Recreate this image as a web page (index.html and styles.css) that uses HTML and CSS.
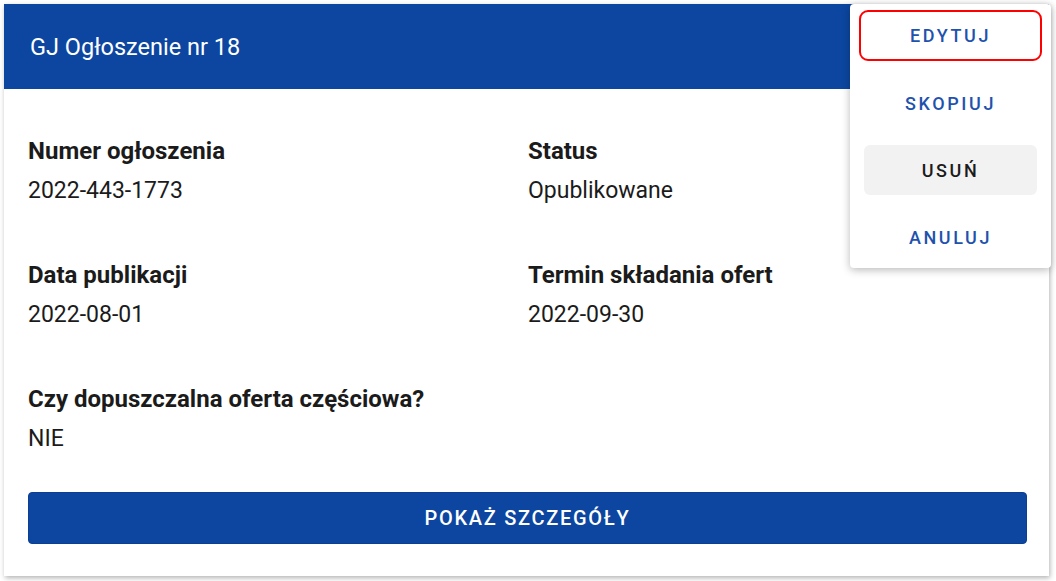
FILE: index.html
```html
<!DOCTYPE html>
<html lang="pl">
<head>
<meta charset="UTF-8" />
<meta name="viewport" content="width=device-width, initial-scale=1" />
<title>Ogłoszenie</title>
<link rel="stylesheet" href="styles.css">
</head>
<body>

<div class="strona">
  <div class="karta">
    <header class="karta-naglowek">GJ Ogłoszenie nr 18</header>

    <div class="karta-tresc">
      <div class="pola">
        <div class="pole">
          <div class="etykieta">Numer ogłoszenia</div>
          <div class="wartosc">2022-443-1773</div>
        </div>
        <div class="pole">
          <div class="etykieta">Status</div>
          <div class="wartosc">Opublikowane</div>
        </div>
        <div class="pole">
          <div class="etykieta">Data publikacji</div>
          <div class="wartosc">2022-08-01</div>
        </div>
        <div class="pole">
          <div class="etykieta">Termin składania ofert</div>
          <div class="wartosc">2022-09-30</div>
        </div>
        <div class="pole">
          <div class="etykieta">Czy dopuszczalna oferta częściowa?</div>
          <div class="wartosc">NIE</div>
        </div>
      </div>

      <button class="przycisk-szczegoly">Pokaż szczegóły</button>
    </div>
  </div>

  <ul class="menu">
    <li class="menu-pozycja aktywna">Edytuj</li>
    <li class="menu-pozycja">Skopiuj</li>
    <li class="menu-pozycja zaznaczona">Usuń</li>
    <li class="menu-pozycja">Anuluj</li>
  </ul>
</div>

</body>
</html>
```

FILE: styles.css
```css
body {
  font-family: Roboto, "Liberation Sans", sans-serif;
  margin: 0;
  background: #ffffff;
  color: #1b1b1b;
}
.strona {
  position: relative;
  padding: 4px 7px 5px 4px;
}
.karta {
  background: white;
  height: 572px;
  box-shadow: 1px 2px 5px rgba(0,0,0,0.3);
  display: flex;
  flex-direction: column;
}
.karta-naglowek {
  background: #0c46a0;
  color: white;
  height: 85px;
  display: flex;
  align-items: center;
  padding-left: 26px;
  font-size: 23.5px;
}
.karta-tresc {
  padding: 48px 22px 0 24px;
}
.pola {
  display: grid;
  grid-template-columns: 500px 1fr;
  row-gap: 56px;
}
.etykieta {
  font-weight: bold;
  font-size: 24px;
  line-height: 28px;
  margin-bottom: 12px;
}
.wartosc {
  font-size: 23px;
  line-height: 28px;
}
.przycisk-szczegoly {
  display: block;
  width: 100%;
  height: 52px;
  margin-top: 39px;
  background: #0c46a0;
  color: white;
  border: 1px solid #0a3f93;
  border-radius: 4px;
  font-family: inherit;
  font-size: 20px;
  font-weight: 500;
  letter-spacing: 1.7px;
  text-transform: uppercase;
  cursor: pointer;
}

/* Menu kontekstowe */
.menu {
  position: absolute;
  top: 4px;
  left: 850px;
  width: 201px;
  margin: 0;
  padding: 6px 0;
  list-style: none;
  background: white;
  border-radius: 4px;
  box-shadow: 0 2px 8px rgba(0,0,0,0.28);
  display: flex;
  flex-direction: column;
  gap: 17px;
}
.menu-pozycja {
  height: 50px;
  margin: 0 14px;
  display: flex;
  align-items: center;
  justify-content: center;
  color: #1f52ad;
  font-size: 18px;
  font-weight: 500;
  letter-spacing: 2.6px;
  text-transform: uppercase;
  border-radius: 6px;
  cursor: pointer;
}
.menu-pozycja.aktywna {
  margin: 0 9px;
  height: 47px;
  border: 2px solid #f00;
  border-radius: 9px;
}
.menu-pozycja.zaznaczona {
  background: #f2f2f2;
  color: #1b1b1b;
}
```
